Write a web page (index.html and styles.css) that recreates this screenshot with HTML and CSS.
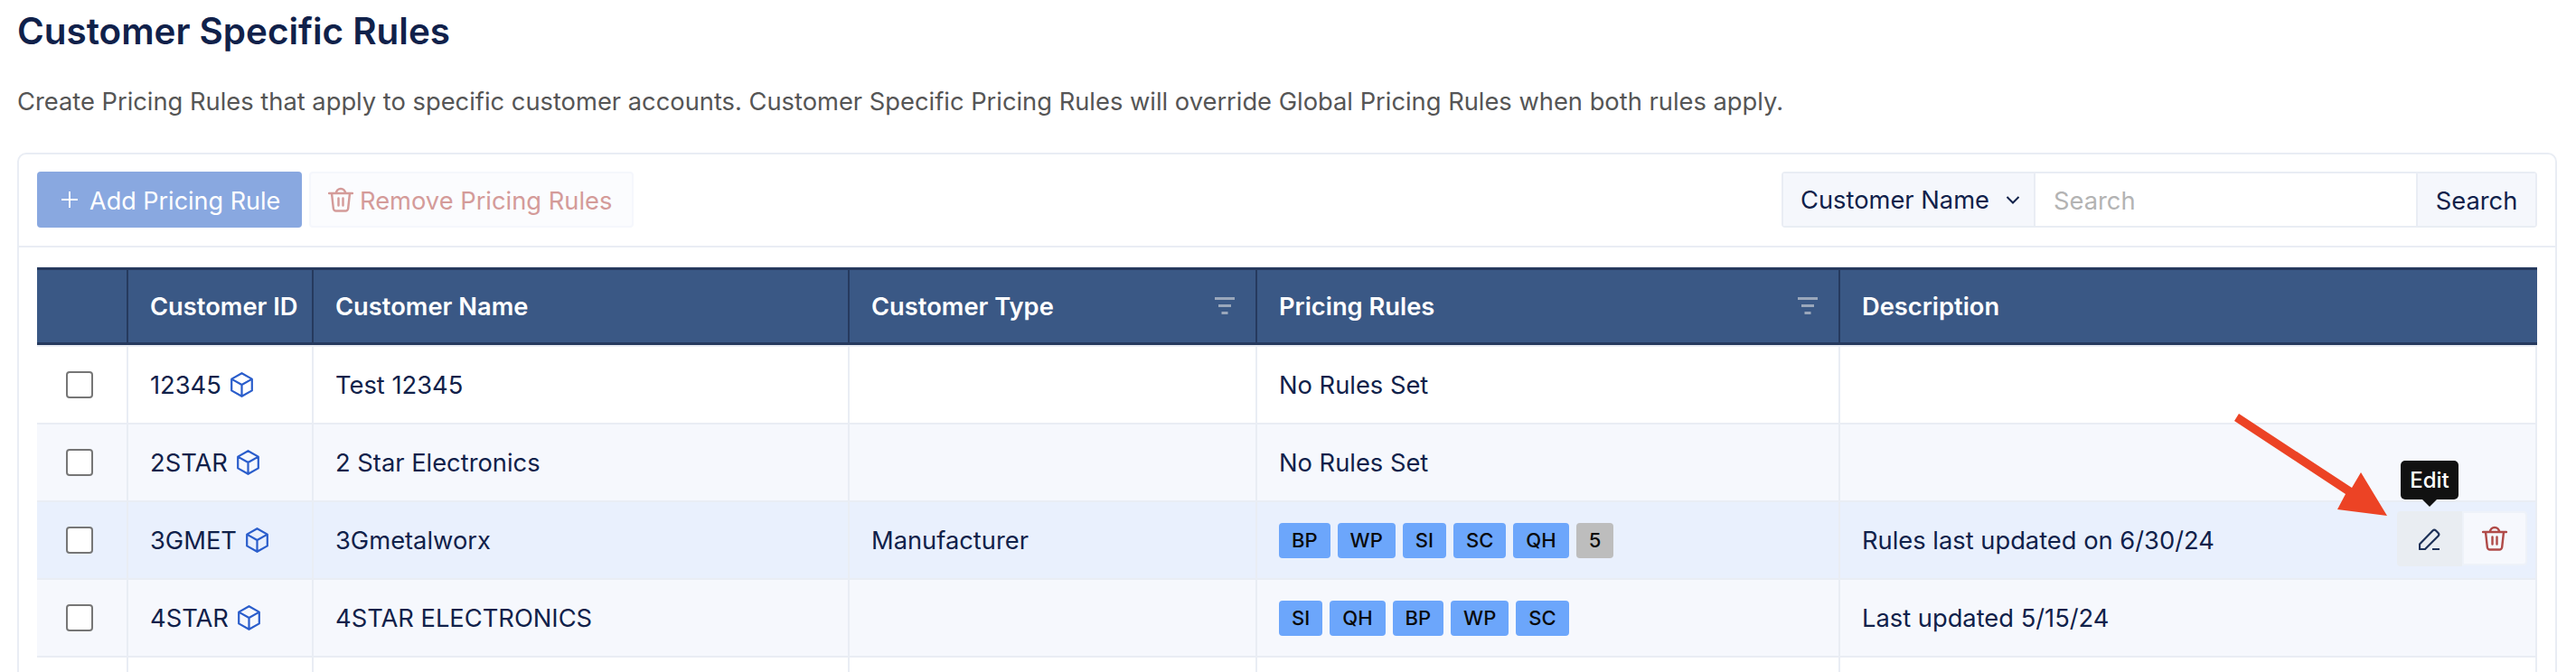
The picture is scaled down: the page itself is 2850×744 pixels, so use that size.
FILE: index.html
```html
<!DOCTYPE html>
<html lang="en">
<head>
<meta charset="utf-8">
<title>Customer Specific Rules</title>
<link rel="stylesheet" href="styles.css">
</head>
<body>
<svg class="defs" width="0" height="0" aria-hidden="true">
  <symbol id="cube" viewBox="0 0 25 28"><path d="M12.5 1.2 23.8 7.6V20.4L12.5 26.8 1.2 20.4V7.6ZM1.2 7.6 12.5 14 23.8 7.6M12.5 14V26.8" fill="none" stroke="currentColor" stroke-width="2.200" stroke-linejoin="round"/></symbol>
  <symbol id="trash" viewBox="0 0 28 28"><path d="M1 7H27M9 7A5 5 0 0 1 19 7M4 7 5.800 23.500A3 3 0 0 0 8.800 26.500H19.200A3 3 0 0 0 22.200 23.500L24 7M11.500 12.500V20.500M16.500 12.500V20.500" fill="none" stroke="currentColor" stroke-width="2.400" stroke-linecap="round" stroke-linejoin="round"/></symbol>
  <symbol id="filter" viewBox="0 0 22 20"><path d="M0 1.500H22M4 9.500H18M7.500 17.500H14.500" fill="none" stroke="currentColor" stroke-width="3"/></symbol>
</svg>

<main class="page">
  <h1 class="title">Customer Specific Rules</h1>
  <p class="lead">Create Pricing Rules that apply to specific customer accounts. Customer Specific Pricing Rules will override Global Pricing Rules when both rules apply.</p>

  <section class="card">
    <div class="toolbar">
      <div class="actions">
        <button class="btn btn-add" type="button">
          <svg class="plus" width="18" height="18" viewBox="0 0 18 18"><path d="M9 0V18M0 9H18" fill="none" stroke="currentColor" stroke-width="2"/></svg>
          Add Pricing Rule
        </button>
        <button class="btn btn-remove" type="button">
          <svg class="btn-trash"><use href="#trash"/></svg>
          Remove Pricing Rules
        </button>
      </div>
      <div class="search">
        <div class="search-field">Customer Name
          <svg class="chevron" width="16" height="9" viewBox="0 0 16 9"><path d="M1.500 1 8 7.500 14.500 1" fill="none" stroke="currentColor" stroke-width="2"/></svg>
        </div>
        <input class="search-input" type="text" placeholder="Search">
        <button class="search-btn" type="button">Search</button>
      </div>
    </div>

    <div class="table-wrap">
      <table class="grid">
        <colgroup>
          <col class="c-check"><col class="c-id"><col class="c-name"><col class="c-type"><col class="c-rules"><col class="c-desc">
        </colgroup>
        <thead>
          <tr>
            <th></th>
            <th>Customer ID</th>
            <th>Customer Name</th>
            <th><div class="th-flex">Customer Type<svg class="filter"><use href="#filter"/></svg></div></th>
            <th><div class="th-flex">Pricing Rules<svg class="filter"><use href="#filter"/></svg></div></th>
            <th>Description</th>
          </tr>
        </thead>
        <tbody>
          <tr>
            <td class="check"><span class="box"></span></td>
            <td><div class="id">12345<svg class="cube"><use href="#cube"/></svg></div></td>
            <td>Test 12345</td>
            <td></td>
            <td>No Rules Set</td>
            <td></td>
          </tr>
          <tr class="alt">
            <td class="check"><span class="box"></span></td>
            <td><div class="id">2STAR<svg class="cube"><use href="#cube"/></svg></div></td>
            <td>2 Star Electronics</td>
            <td></td>
            <td>No Rules Set</td>
            <td></td>
          </tr>
          <tr class="hover">
            <td class="check"><span class="box"></span></td>
            <td><div class="id">3GMET<svg class="cube"><use href="#cube"/></svg></div></td>
            <td>3Gmetalworx</td>
            <td>Manufacturer</td>
            <td><div class="tags"><span class="tag">BP</span><span class="tag">WP</span><span class="tag">SI</span><span class="tag">SC</span><span class="tag">QH</span><span class="tag tag-more">5</span></div></td>
            <td class="desc">Rules last updated on 6/30/24
              <div class="row-actions">
                <button class="act act-edit" type="button">
                  <span class="tooltip">Edit</span>
                  <svg width="24" height="24" viewBox="0 0 24 24"><path d="M1 23V17.500L15.500 2.500A2.500 2.500 0 0 1 19 2.500L21.500 5A2.500 2.500 0 0 1 21.500 8.500L7 23ZM15 23H23" fill="none" stroke="currentColor" stroke-width="2.200" stroke-linejoin="round"/></svg>
                </button>
                <button class="act act-del" type="button"><svg width="28" height="28"><use href="#trash"/></svg></button>
              </div>
            </td>
          </tr>
          <tr class="alt">
            <td class="check"><span class="box"></span></td>
            <td><div class="id">4STAR<svg class="cube"><use href="#cube"/></svg></div></td>
            <td>4STAR ELECTRONICS</td>
            <td></td>
            <td><div class="tags"><span class="tag">SI</span><span class="tag">QH</span><span class="tag">BP</span><span class="tag">WP</span><span class="tag">SC</span></div></td>
            <td>Last updated 5/15/24</td>
          </tr>
          <tr>
            <td></td><td></td><td></td><td></td><td></td><td></td>
          </tr>
        </tbody>
      </table>
    </div>

    <svg class="arrow" width="200" height="130" viewBox="0 0 200 130" aria-hidden="true"><path d="M5 0 130 82 140 65 169 113 114 106 123 89 0 8Z" fill="#ec4325"/></svg>
  </section>
</main>
</body>
</html>
```
FILE: styles.css
```css
* { box-sizing: border-box; }
html, body { margin: 0; height: 100%; overflow: hidden; background: #fff; }
body { font-family: Inter, "Liberation Sans", sans-serif; font-size: 27.3px; color: #10214a; }
.defs { position: absolute; }

.page { padding: 0 21px 0 19px; }
.title { margin: 0; padding-top: 11px; font-size: 40.4px; line-height: 48px; font-weight: 600; color: #10214a; }
.lead { margin: 34px 0 0; font-size: 27.3px; line-height: 40px; color: #555; }

.card { position: relative; margin-top: 36px; border: 2px solid #e9edf4; border-radius: 10px; background: #fff; height: 700px; }

.toolbar { display: flex; justify-content: space-between; height: 103px; padding: 19px 20px 20px; border-bottom: 2px solid #e9edf4; }
.actions { display: flex; gap: 8px; }
.btn { display: flex; align-items: center; height: 62px; font: inherit; border-radius: 4px; cursor: pointer; }
.btn-add { width: 293px; padding: 2px 0 0 27px; gap: 13px; border: 0; background: #89a8e0; color: #fff; font-size: 27px; }
.btn-remove { width: 359px; padding: 2px 0 0 19px; gap: 7px; border: 2px solid #f5f7fc; background: #fbfcfe; color: #d49b99; }
.btn-trash { width: 28px; height: 28px; margin-top: -2px; }
.plus { margin-top: -2px; }

.search { display: flex; height: 62px; width: 836px; border: 2px solid #e9edf4; border-radius: 4px; }
.search-field { display: flex; align-items: center; gap: 18px; width: 279px; padding: 1px 0 0 19px; background: #f5f7fc; border-right: 2px solid #e9edf4; white-space: nowrap; }
.chevron { flex: none; }
.search-input { flex: 1; min-width: 0; padding: 2px 0 0 20px; border: 0; outline: 0; font: inherit; color: inherit; background: #fff; }
.search-input::placeholder { color: #b3b3b3; opacity: 1; }
.search-btn { width: 132px; padding: 2px 0 0; border: 0; border-left: 2px solid #e9edf4; background: #f5f7fc; font: inherit; color: inherit; }

.table-wrap { padding: 22px 20px 0; }
.grid { width: 2766px; table-layout: fixed; border-collapse: separate; border-spacing: 0; }
.c-check { width: 99px; }
.c-id { width: 205px; }
.c-name { width: 593px; }
.c-type { width: 451px; }
.c-rules { width: 645px; }
.c-desc { width: 773px; }

.grid th { height: 86px; padding: 0 24px; text-align: left; font-weight: 600; color: #fff; background: #3a5885; border-top: 3px solid #263a5e; border-bottom: 3px solid #263a5e; border-left: 2px solid #263a5e; box-shadow: 0 -1px 0 #e9edf4; white-space: nowrap; }
.grid th:first-child { border-left: 0; }
.th-flex { display: flex; align-items: center; justify-content: space-between; }
.filter { width: 22px; height: 20px; margin-right: -1px; color: #9aa7bb; }

.grid td { height: 86px; padding: 0 24px; border-left: 2px solid #e9edf4; border-bottom: 2px solid #e9edf4; background: #fff; white-space: nowrap; }
.grid tbody tr:first-child td { height: 88px; border-top: 2px solid #e9edf4; }
.grid td:first-child { border-left: 0; }
.grid td:last-child { border-right: 2px solid #e9edf4; }
.grid .alt td { background: #f6f8fd; }
.grid .hover td { background: #e9f0fd; }
.grid td.check { padding: 0; text-align: center; }
.box { display: block; width: 30px; height: 30px; margin: 0 auto 0 32px; border: 2px solid #767676; border-radius: 4px; background: #fff; }

.id { display: flex; align-items: center; gap: 10px; }
.cube { width: 25px; height: 28px; color: #2a5dcb; }

.tags { display: flex; gap: 8px; }
.tag { display: block; height: 39px; padding: 0 14px; border-radius: 4px; background: #6ca6fb; color: #0a0a0a; font-size: 22px; line-height: 39px; font-weight: 500; }
.tag-more { background: #bdbdbd; }

.desc { position: relative; }
.row-actions { position: absolute; right: 9px; top: 10px; display: flex; }
.act { position: relative; display: flex; align-items: center; justify-content: center; width: 72px; height: 61px; padding: 0; border: 0; border-radius: 4px 0 0 4px; }
.act-edit { background: #e9edf2; color: #1d3158; }
.act-del { height: 60px; border: 2px solid #eef2f9; border-radius: 0 4px 4px 0; background: #f6f8fd; color: #b04a48; }
.tooltip { position: absolute; left: 4px; bottom: 74px; width: 64px; height: 43px; border-radius: 5px; background: #111; color: #fff; font: 500 24px/43px Inter, "Liberation Sans", sans-serif; text-align: center; }
.tooltip::after { content: ""; position: absolute; left: 24px; top: 43px; border: 8px solid transparent; border-top-color: #111; border-bottom: 0; }

.arrow { position: absolute; left: 2451px; top: 287px; }
```
